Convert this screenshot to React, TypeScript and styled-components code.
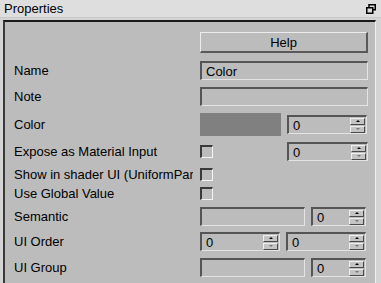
import React from "react";
import styled, { createGlobalStyle } from "styled-components";

const Global = createGlobalStyle`
  html, body { margin: 0; padding: 0; background: #d4d4d4; }
  body { font-family: "Liberation Sans", Arial, sans-serif; font-size: 13px; color: #000; }
  * { box-sizing: border-box; }
`;

const Window = styled.div`
  width: 381px;
  height: 283px;
  display: flex;
  flex-direction: column;
  background: #d4d4d4;
  overflow: hidden;
`;

const TitleBar = styled.div`
  height: 18px;
  display: flex;
  align-items: center;
  justify-content: space-between;
  padding: 0 5px 0 4px;
  background: #dedede;
  border-bottom: 1px solid #c8c8c8;
  font-size: 13px;
`;

const Panel = styled.div`
  flex: 1;
  margin: 2px 5px 0 3px;
  background: #bcbcbc;
  border-top: 2px solid #1a1a1a;
  border-left: 2px solid #3a3a3a;
  border-right: 1px solid #f0f0f0;
  display: flex;
  flex-direction: column;
  padding-left: 9px;
`;

const Row = styled.div<{ $mt: number; $h: number }>`
  display: grid;
  grid-template-columns: 186px 168px;
  align-items: center;
  margin-top: ${(p) => p.$mt}px;
  height: ${(p) => p.$h}px;
`;

const Label = styled.div`
  white-space: nowrap;
  overflow: hidden;
  font-size: 13px;
  line-height: 15px;
  padding-right: 7px;
`;

const LabelText = styled.span`
  display: block;
  overflow: hidden;
`;

const Controls = styled.div`
  display: flex;
  align-items: center;
  gap: 6px;
  height: 100%;
`;

const Button = styled.div`
  width: 168px;
  height: 21px;
  display: flex;
  align-items: center;
  justify-content: center;
  background: #bcbcbc;
  border-top: 1px solid #ececec;
  border-left: 1px solid #ececec;
  border-right: 2px solid #5a5a5a;
  border-bottom: 2px solid #5a5a5a;
  font-size: 13px;
`;

const Field = styled.div<{ $w: number }>`
  width: ${(p) => p.$w}px;
  height: 19px;
  display: flex;
  align-items: center;
  padding-left: 4px;
  background: #bcbcbc;
  border-top: 2px solid #555;
  border-left: 2px solid #555;
  border-right: 1px solid #e4e4e4;
  border-bottom: 1px solid #e4e4e4;
  font-size: 13px;
`;

const Swatch = styled.div`
  width: 81px;
  height: 23px;
  background: #808080;
`;

const SpinBox = styled(Field)<{ $push?: boolean }>`
  justify-content: space-between;
  padding-right: 1px;
  margin-left: ${(p) => (p.$push ? "auto" : "0")};
`;

const SpinButtons = styled.div`
  display: flex;
  flex-direction: column;
  gap: 1px;
`;

const SpinBtn = styled.div<{ $dim?: boolean }>`
  width: 15px;
  height: 7px;
  background: #c4c4c4;
  border-top: 1px solid #efefef;
  border-left: 1px solid #efefef;
  border-right: 1px solid #4a4a4a;
  border-bottom: 1px solid #4a4a4a;
  display: flex;
  align-items: center;
  justify-content: center;
  &::after {
    content: "";
    width: 0;
    height: 0;
    border-left: 2px solid transparent;
    border-right: 2px solid transparent;
    ${(p) =>
      p.$dim
        ? "border-top: 2px solid #777;"
        : "border-bottom: 2px solid #000;"}
  }
`;

const Check = styled.div`
  width: 13px;
  height: 13px;
  border-top: 2px solid #3a3a3a;
  border-left: 2px solid #3a3a3a;
  border-right: 1px solid #f4f4f4;
  border-bottom: 1px solid #f4f4f4;
  background: #bcbcbc;
`;

const Spinner = ({ w, push }: { w: number; push?: boolean }) => (
  <SpinBox $w={w} $push={push}>
    <span>0</span>
    <SpinButtons>
      <SpinBtn />
      <SpinBtn $dim />
    </SpinButtons>
  </SpinBox>
);

const RestoreIcon = () => (
  <svg width="10" height="10" viewBox="0 0 10 10">
    <rect x="3" y="0.75" width="6.25" height="5" fill="none" stroke="#000" strokeWidth="1.5" />
    <rect x="0.75" y="3.75" width="6" height="5.5" fill="#dedede" stroke="#000" strokeWidth="1.5" />
  </svg>
);

export default function App() {
  return (
    <Window>
      <Global />
      <TitleBar>
        <span>Properties</span>
        <RestoreIcon />
      </TitleBar>
      <Panel>
        <Row $mt={10} $h={21}>
          <Label />
          <Controls>
            <Button>Help</Button>
          </Controls>
        </Row>
        <Row $mt={8} $h={19}>
          <Label>Name</Label>
          <Controls>
            <Field $w={168}>Color</Field>
          </Controls>
        </Row>
        <Row $mt={7} $h={19}>
          <Label>Note</Label>
          <Controls>
            <Field $w={168} />
          </Controls>
        </Row>
        <Row $mt={7} $h={23}>
          <Label>Color</Label>
          <Controls>
            <Swatch />
            <Spinner w={80} />
          </Controls>
        </Row>
        <Row $mt={6} $h={19}>
          <Label>Expose as Material Input</Label>
          <Controls>
            <Check />
            <Spinner w={81} push />
          </Controls>
        </Row>
        <Row $mt={7} $h={13}>
          <Label>
            <LabelText>Show in shader UI (UniformParameter)</LabelText>
          </Label>
          <Controls>
            <Check />
          </Controls>
        </Row>
        <Row $mt={6} $h={13}>
          <Label>Use Global Value</Label>
          <Controls>
            <Check />
          </Controls>
        </Row>
        <Row $mt={7} $h={19}>
          <Label>Semantic</Label>
          <Controls>
            <Field $w={105} />
            <Spinner w={55} />
          </Controls>
        </Row>
        <Row $mt={6} $h={19}>
          <Label>UI Order</Label>
          <Controls>
            <Spinner w={80} />
            <Spinner w={80} />
          </Controls>
        </Row>
        <Row $mt={7} $h={19}>
          <Label>UI Group</Label>
          <Controls>
            <Field $w={105} />
            <Spinner w={55} />
          </Controls>
        </Row>
      </Panel>
    </Window>
  );
}
